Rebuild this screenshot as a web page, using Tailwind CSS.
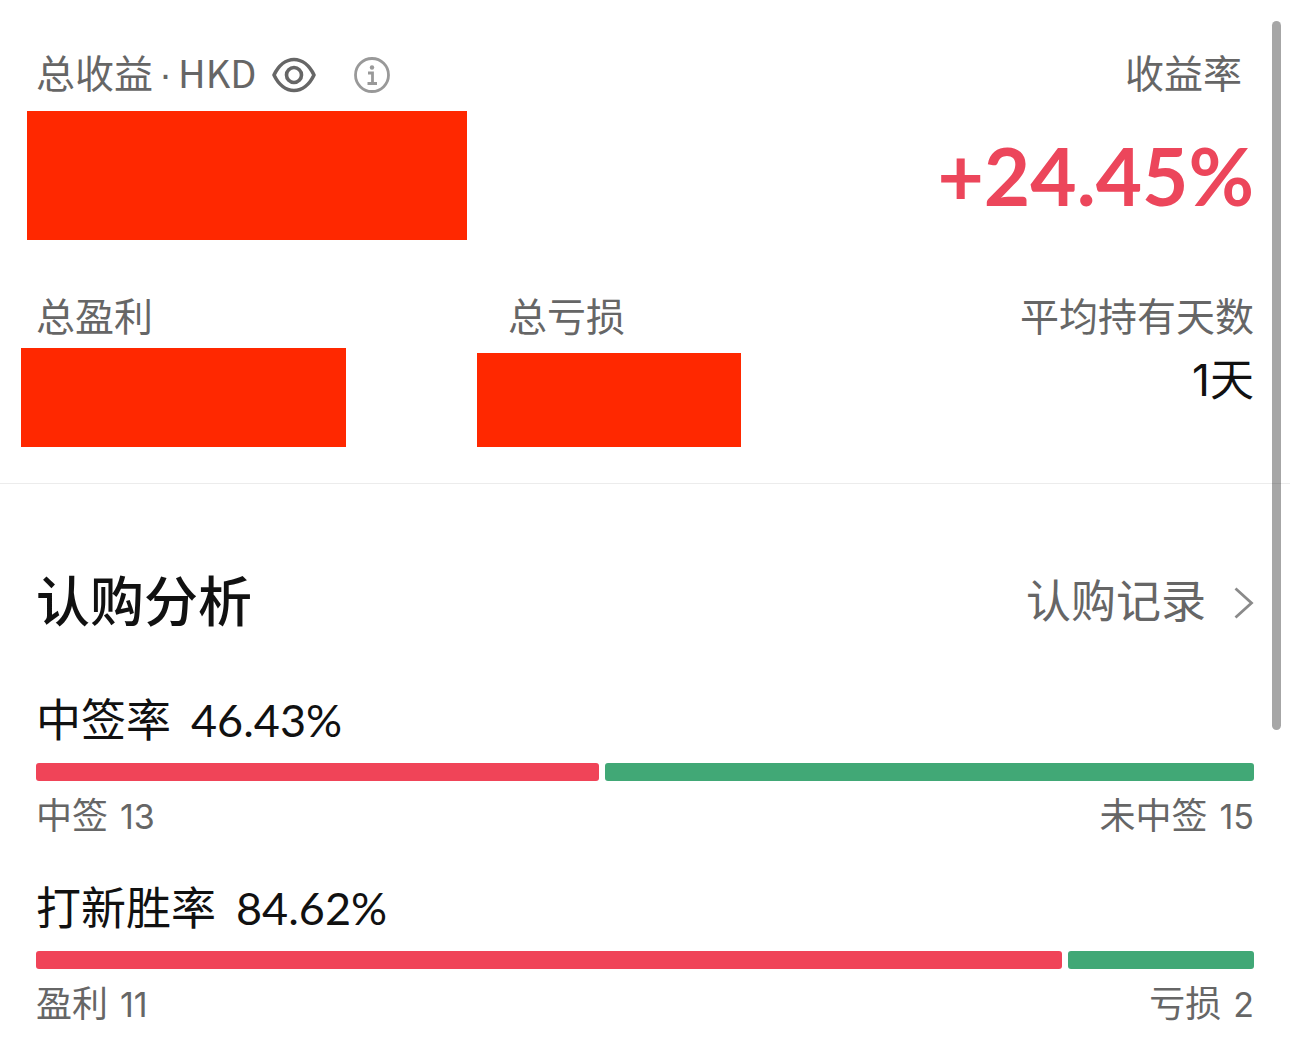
<!DOCTYPE html>
<html lang="zh-CN">
  <head>
    <meta charset="utf-8" />
    <meta content="width=device-width, initial-scale=1.0" name="viewport" />
    <title>认购分析</title>
    <script src="https://cdn.jsdelivr.net/npm/@tailwindcss/browser@4"></script>
  </head>
  <body
    class="relative bg-white font-['Liberation_Sans','Noto_Sans_CJK_SC',sans-serif] text-[#111111]"
  >
    <!-- Summary -->
    <section class="border-b border-[#ececec] px-9 pt-[51px] pb-9">
      <div class="flex justify-between">
        <div>
          <div class="flex h-12 items-center text-[#666666]">
            <p class="flex items-baseline gap-[6px] text-[39px] leading-[48px]">
              <span>总收益</span>
              <span>·</span>
              <span class="font-['Noto_Sans_CJK_SC',sans-serif] text-[38px] leading-[40px]">HKD</span>
            </p>
            <button type="button" aria-label="显示金额" class="ml-4">
              <svg class="h-9 w-11" viewBox="0 0 44 36" fill="none" stroke="currentColor" stroke-width="3.600">
                <path d="M2 18C6.500 8.500 14 2.500 22 2.500S37.500 8.500 42 18C37.500 27.500 30 33.500 22 33.500S6.500 27.500 2 18Z" stroke-linejoin="round" />
                <circle cx="22" cy="18" r="7.500" />
              </svg>
            </button>
            <button type="button" aria-label="说明" class="ml-9 text-[#999999]">
              <svg class="size-10" viewBox="0 0 40 40" fill="none" stroke="currentColor" stroke-width="2.800">
                <circle cx="20" cy="20" r="16.500" />
                <path d="M16 18h4.500v10.500M15.500 28.500h9.500" />
                <circle cx="20" cy="12.500" r="2.200" fill="currentColor" stroke="none" />
              </svg>
            </button>
          </div>
          <div class="mt-3 -ml-[9px] h-[129px] w-[440px] bg-[#ff2800]"></div>
        </div>
        <div class="text-right">
          <p class="pr-3 text-[39px] leading-[48px] text-[#666666]">收益率</p>
          <p
            class="mt-3 font-['Lato',sans-serif] text-[80px] leading-[129px] font-bold text-[#ec465b]"
          >
            +24.45%
          </p>
        </div>
      </div>

      <div class="mt-[54px] grid grid-cols-[472fr_472fr_274fr]">
        <div>
          <p class="text-[39px] leading-[48px] text-[#666666]">总盈利</p>
          <div class="mt-[6px] -ml-[15px] h-[99px] w-[325px] bg-[#ff2800]"></div>
        </div>
        <div>
          <p class="text-[39px] leading-[48px] text-[#666666]">总亏损</p>
          <div class="mt-[11px] -ml-[31px] h-[94px] w-[264px] bg-[#ff2800]"></div>
        </div>
        <div class="text-right">
          <p class="text-[39px] leading-[48px] text-[#666666]">平均持有天数</p>
          <p class="mt-[6px] font-['Inter','Noto_Sans_CJK_SC',sans-serif] text-[44px] leading-[64px]">
            1天
          </p>
        </div>
      </div>
    </section>

    <!-- Subscription analysis -->
    <section class="px-9 pt-[87px] pb-6">
      <div class="flex items-center justify-between">
        <h2 class="text-[54px] leading-[64px] font-medium">认购分析</h2>
        <a href="#" class="flex items-center text-[45px] leading-[64px] text-[#666666]">
          认购记录
          <svg class="ml-7 h-8 w-5 text-[#8a8a8a]" viewBox="0 0 20 32" fill="none" stroke="currentColor" stroke-width="2.800">
            <path d="M1.500 1.500 17.500 16 1.500 30.500" />
          </svg>
        </a>
      </div>

      <div class="mt-[55px]">
        <h3 class="flex items-baseline gap-5 text-[45px] leading-[60px]">
          中签率 <span class="font-['Lato',sans-serif]">46.43%</span>
        </h3>
        <div class="mt-[11px] flex h-[18px] gap-[6px]">
          <div class="rounded-[3px] bg-[#f04458]" style="flex: 13 0 0"></div>
          <div class="rounded-[3px] bg-[#41a876]" style="flex: 15 0 0"></div>
        </div>
        <div class="mt-3 flex justify-between text-[36px] leading-[48px] text-[#666666]">
          <p class="flex items-baseline gap-3">
            中签 <span class="font-['Inter',sans-serif] text-[34px] leading-[40px]">13</span>
          </p>
          <p class="flex items-baseline gap-3">
            未中签 <span class="font-['Inter',sans-serif] text-[34px] leading-[40px]">15</span>
          </p>
        </div>
      </div>

      <div class="mt-[37px]">
        <h3 class="flex items-baseline gap-5 text-[45px] leading-[60px]">
          打新胜率 <span class="font-['Lato',sans-serif]">84.62%</span>
        </h3>
        <div class="mt-[11px] flex h-[18px] gap-[6px]">
          <div class="rounded-[3px] bg-[#f04458]" style="flex: 11 0 0"></div>
          <div class="rounded-[3px] bg-[#41a876]" style="flex: 2 0 0"></div>
        </div>
        <div class="mt-3 flex justify-between text-[36px] leading-[48px] text-[#666666]">
          <p class="flex items-baseline gap-3">
            盈利 <span class="font-['Inter',sans-serif] text-[34px] leading-[40px]">11</span>
          </p>
          <p class="flex items-baseline gap-3">
            亏损 <span class="font-['Inter',sans-serif] text-[34px] leading-[40px]">2</span>
          </p>
        </div>
      </div>
    </section>

    <!-- Scroll indicator -->
    <div class="absolute top-[21px] right-[9px] h-[709px] w-[9px] rounded-full bg-black/35"></div>
  </body>
</html>
